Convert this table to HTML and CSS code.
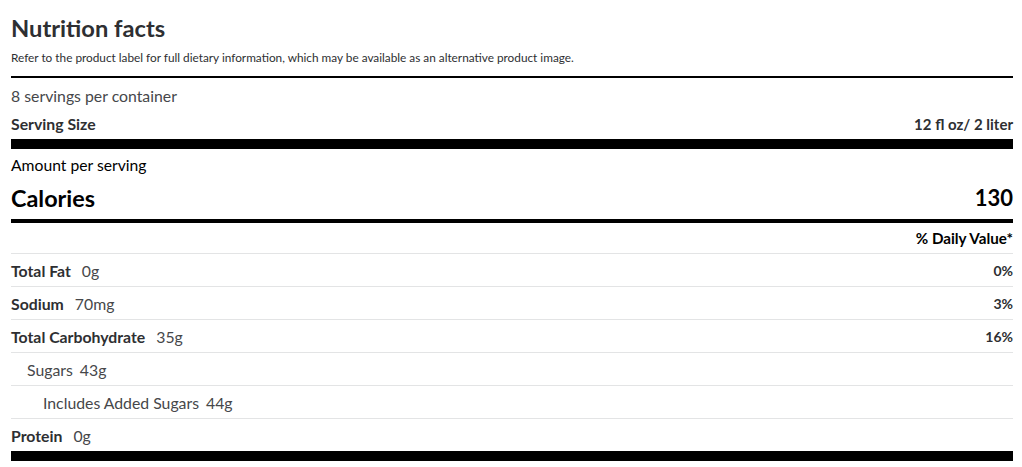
FILE: index.html
```html
<!DOCTYPE html>
<html lang="en">
<head>
<meta charset="utf-8">
<title>Nutrition facts</title>
<link rel="stylesheet" href="styles.css">
</head>
<body>
<section class="nf">
  <h2 class="nf-title">Nutrition facts</h2>
  <p class="nf-note">Refer to the product label for full dietary information, which may be available as an alternative product image.</p>
  <div class="nf-servings">8 servings per container</div>
  <div class="nf-size"><span class="nf-size-label">Serving Size</span><span>12 fl oz/ 2 liter</span></div>
  <div class="nf-amount">Amount per serving</div>
  <div class="nf-calories"><span>Calories</span><span class="nf-cal-val">130</span></div>
  <div class="nf-dvhead"><span>% Daily Value*</span></div>
  <div class="nf-row"><span><b class="nf-label">Total Fat</b><span class="nf-val nf-val-b">0g</span></span><b class="nf-pct">0%</b></div>
  <div class="nf-row"><span><b class="nf-label">Sodium</b><span class="nf-val nf-val-b">70mg</span></span><b class="nf-pct">3%</b></div>
  <div class="nf-row"><span><b class="nf-label">Total Carbohydrate</b><span class="nf-val nf-val-b">35g</span></span><b class="nf-pct">16%</b></div>
  <div class="nf-row nf-ind1"><span><span class="nf-plain">Sugars</span><span class="nf-val">43g</span></span></div>
  <div class="nf-row nf-ind2"><span><span class="nf-plain">Includes Added Sugars</span><span class="nf-val">44g</span></span></div>
  <div class="nf-row nf-last"><span><b class="nf-label">Protein</b><span class="nf-val nf-val-b">0g</span></span></div>
</section>
</body>
</html>
```

FILE: styles.css
```css
html, body {
  margin: 0;
  padding: 0;
  background: #fff;
}
body {
  font-family: Lato, "Noto Sans", "Liberation Sans", sans-serif;
  color: #2e2f32;
}
.nf {
  padding: 12px 9px 0 11px;
  display: flex;
  flex-direction: column;
}
.nf-title {
  margin: 0;
  font-size: 23.7px;
  line-height: 32px;
  height: 32px;
  font-weight: 700;
}
.nf-note {
  margin: 6px 0 0;
  font-size: 11.8px;
  line-height: 16px;
  height: 16px;
  color: #2e2f32;
  padding-bottom: 10px;
  border-bottom: 2px solid #000;
}
.nf-servings {
  margin-top: 8px;
  font-size: 15.8px;
  line-height: 20px;
  height: 20px;
  color: #46474a;
}
.nf-size {
  margin-top: 8px;
  display: flex;
  justify-content: space-between;
  align-items: center;
  font-size: 15px;
  line-height: 20px;
  height: 20px;
  font-weight: 700;
  padding-bottom: 5px;
  border-bottom: 10px solid #000;
}
.nf-size-label {
  font-size: 15.8px;
}
.nf-amount {
  margin-top: 6px;
  font-size: 15.7px;
  line-height: 20px;
  height: 20px;
  color: #000;
}
.nf-calories {
  margin-top: 9px;
  display: flex;
  justify-content: space-between;
  align-items: center;
  font-size: 23.4px;
  line-height: 28px;
  height: 28px;
  font-weight: 700;
  color: #000;
  padding-bottom: 7px;
  border-bottom: 4px solid #000;
}
.nf-cal-val {
  font-size: 22px;
}
.nf-dvhead {
  height: 30px;
  display: flex;
  align-items: center;
  justify-content: flex-end;
  font-size: 15.2px;
  font-weight: 700;
  border-bottom: 1px solid #e3e4e5;
  color: #000;
}
.nf-row {
  height: 32px;
  display: flex;
  align-items: center;
  justify-content: space-between;
  font-size: 15.8px;
  border-bottom: 1px solid #e3e4e5;
}
.nf-label {
  font-weight: 700;
}
.nf-val {
  margin-left: 7px;
  color: #46474a;
}
.nf-val-b {
  margin-left: 11px;
}
.nf-pct {
  font-weight: 700;
  font-size: 14px;
}
.nf-plain {
  color: #46474a;
}
.nf-ind1 {
  padding-left: 16px;
}
.nf-ind2 {
  padding-left: 32px;
}
.nf-last {
  border-bottom: 10px solid #000;
}
```
